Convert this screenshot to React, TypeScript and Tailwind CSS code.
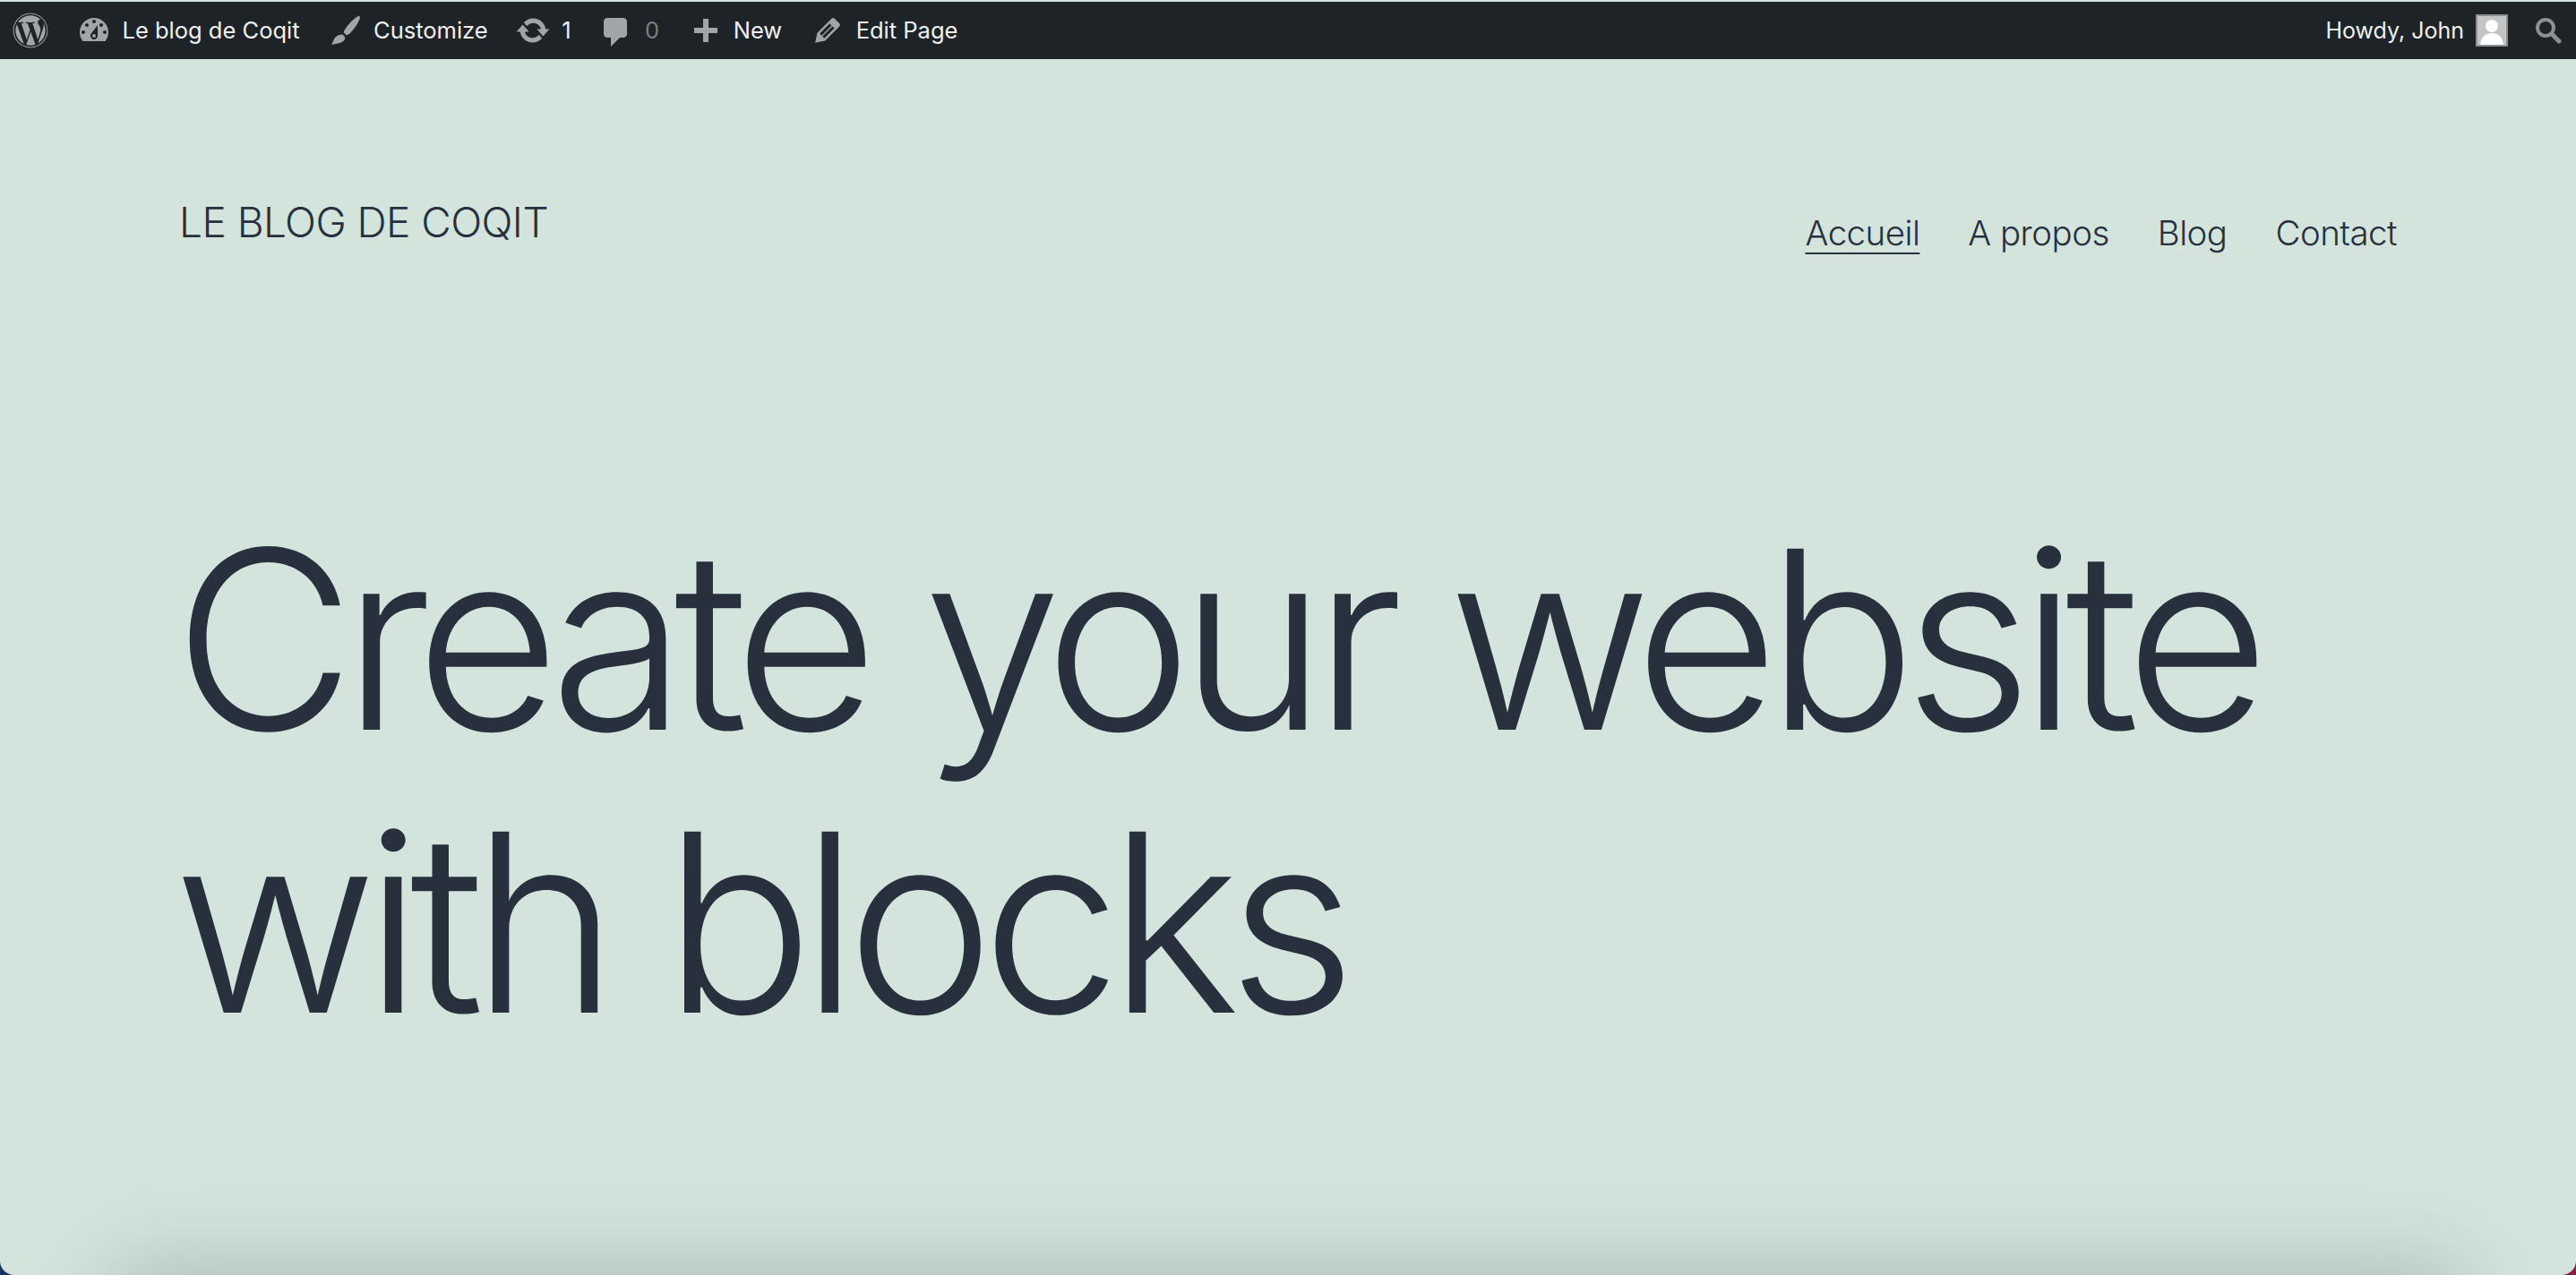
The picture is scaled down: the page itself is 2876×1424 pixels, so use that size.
import React from 'react';
import { FaWordpress } from 'react-icons/fa';

// dashicons, redrawn on their 20x20 grid
const Dash = ({ d, className }: { d: string; className: string }) => (
  <svg viewBox="0 0 20 20" className={className} fill="#a0a5aa" fillRule="evenodd">
    <path d={d} />
  </svg>
);

const icons = {
  dashboard:
    'M3.76 16h12.48c1.1-1.37 1.76-3.11 1.76-5 0-4.42-3.58-8-8-8s-8 3.58-8 8c0 1.89.66 3.63 1.76 5zM10 4c.55 0 1 .45 1 1s-.45 1-1 1-1-.45-1-1 .45-1 1-1zM6 6c.55 0 1 .45 1 1s-.45 1-1 1-1-.45-1-1 .45-1 1-1zm8 0c.55 0 1 .45 1 1s-.45 1-1 1-1-.45-1-1 .45-1 1-1zm-5.37 5.55L12 7v6c0 1.1-.9 2-2 2s-2-.9-2-2c0-.57.24-1.08.63-1.45zM4 10c.55 0 1 .45 1 1s-.45 1-1 1-1-.45-1-1 .45-1 1-1zm12 0c.55 0 1 .45 1 1s-.45 1-1 1-1-.45-1-1 .45-1 1-1zm-5 3c0-.55-.45-1-1-1s-1 .45-1 1 .45 1 1 1 1-.45 1-1z',
  brush:
    'M18.3 2c.4.5 0 1.900-.8 3.400-1 1.900-2.600 4.100-4.300 5.800-.9.9-1.600 1.300-2.300 1.400l-1.500-1.300c.1-.9.5-1.800 1.300-2.800C12 6.500 14.500 3.900 16.500 2.600c.8-.5 1.500-.9 1.800-.6zM8.700 12.300l1.300 1.200c.3 1.200-.2 2.200-1.200 2.800-1.500.9-3.600 1.200-6.500 1.700.7-.6 1-1.400 1.300-2.300.6-1.900 2.500-3.300 5.100-3.400z',
  updates:
    'M10.2 3.280c3.530 0 6.430 2.610 6.920 6h2.080l-3.500 4-3.500-4h2.320c-.45-1.970-2.210-3.450-4.320-3.450-1.450 0-2.730.71-3.540 1.780L4.950 5.660C6.230 4.200 8.110 3.280 10.200 3.280zm-.4 13.440c-3.520 0-6.430-2.610-6.920-6H.8l3.500-4c1.170 1.330 2.330 2.670 3.500 4H5.480c.45 1.970 2.210 3.450 4.320 3.450 1.450 0 2.730-.71 3.540-1.780l1.710 1.950c-1.280 1.460-3.150 2.380-5.250 2.380z',
  comment:
    'M5 3h9c1.100 0 2 .9 2 2v7c0 1.100-.9 2-2 2h-2l-5 5v-5H5c-1.100 0-2-.9-2-2V5c0-1.100.9-2 2-2z',
  plus: 'M17 8.500v3h-5v5H9v-5H4v-3h5v-5h3v5h5z',
  edit: 'M13.890 3.390l2.710 2.720c.46.46.42 1.240.03 1.640l-8.010 8.020-5.560 1.160 1.160-5.580s7.600-7.630 7.990-8.030c.39-.39 1.220-.39 1.680.07zm-2.730 2.790l-5.590 5.610 1.110 1.110 5.540-5.650zm-2.970 8.230l5.580-5.600-1.070-1.080-5.590 5.600z',
};

const BarLink = ({ icon, label, dim }: { icon: string; label: string; dim?: boolean }) => (
  <div className="flex items-center ml-[30.500px]">
    <Dash d={icon} className="w-10 h-10 shrink-0" />
    <span className={`ml-3 mt-px text-[25.500px] ${dim ? 'text-[#7b7f84]' : 'text-[#f0f0f1]'}`}>{label}</span>
  </div>
);

const AdminBar = () => (
  <div className="h-16 bg-[#1d2327] flex items-center text-[25px] font-[Inter,sans-serif]">
    <FaWordpress className="w-10 h-10 ml-[14px] text-[#a0a5aa]" />
    <BarLink icon={icons.dashboard} label="Le blog de Coqit" />
    <BarLink icon={icons.brush} label="Customize" />
    <BarLink icon={icons.updates} label="1" />
    <BarLink icon={icons.comment} label="0" dim />
    <BarLink icon={icons.plus} label="New" />
    <BarLink icon={icons.edit} label="Edit Page" />
    <div className="ml-auto flex items-center text-[#f0f0f1]">
      <span className="mt-px">Howdy, John</span>
      <div className="ml-[13px] w-9 h-9 border-2 border-[#8c8f94] bg-[#c4c4c4] overflow-hidden flex justify-center">
        <svg viewBox="0 0 32 32" className="w-8 h-8" fill="#ffffff">
          <circle cx="16" cy="11" r="7" />
          <path d="M3 32c1-8 5-13 13-13s12 5 13 13z" />
        </svg>
      </div>
      <svg viewBox="0 0 30 30" className="ml-[30px] mr-4 w-[30px] h-[30px]" fill="none" stroke="#8c8f94">
        <circle cx="12" cy="12" r="9" strokeWidth="4" />
        <path d="M19 19l8 8" strokeWidth="5" strokeLinecap="round" />
      </svg>
    </div>
  </div>
);

export default function App() {
  return (
    <div className="h-screen overflow-hidden bg-[linear-gradient(90deg,#1b3561_50%,#8a1f4a_50%)]">
      <div className="relative h-full overflow-hidden rounded-b-2xl bg-[#d3e4dd] pt-0.5 font-[Inter,sans-serif] text-[#28303d]">
        <AdminBar />

        <header className="flex items-start justify-between px-[200px] pt-[154px]">
          <div className="text-[46px] leading-[56px] font-light tracking-[-0.55px]">LE BLOG DE COQIT</div>
          <nav className="flex gap-[54px] pt-[12px] text-[38.400px] leading-[56px] font-light tracking-[-0.5px]">
            <span className="underline decoration-2 underline-offset-[8px]">Accueil</span>
            <span>A propos</span>
            <span>Blog</span>
            <span>Contact</span>
          </nav>
        </header>

        <h1 className="pl-[194px] pt-[268px] text-[278px] leading-[316px] font-light tracking-[-13.900px]">
          Create your website
          <br />
          with blocks
        </h1>

        {/* soft shadow coming up from below the window edge */}
        <div className="absolute left-[130px] right-[130px] -bottom-[100px] h-[100px] shadow-[0_0_100px_0_rgba(60,80,75,0.32)]" />
      </div>
    </div>
  );
}
